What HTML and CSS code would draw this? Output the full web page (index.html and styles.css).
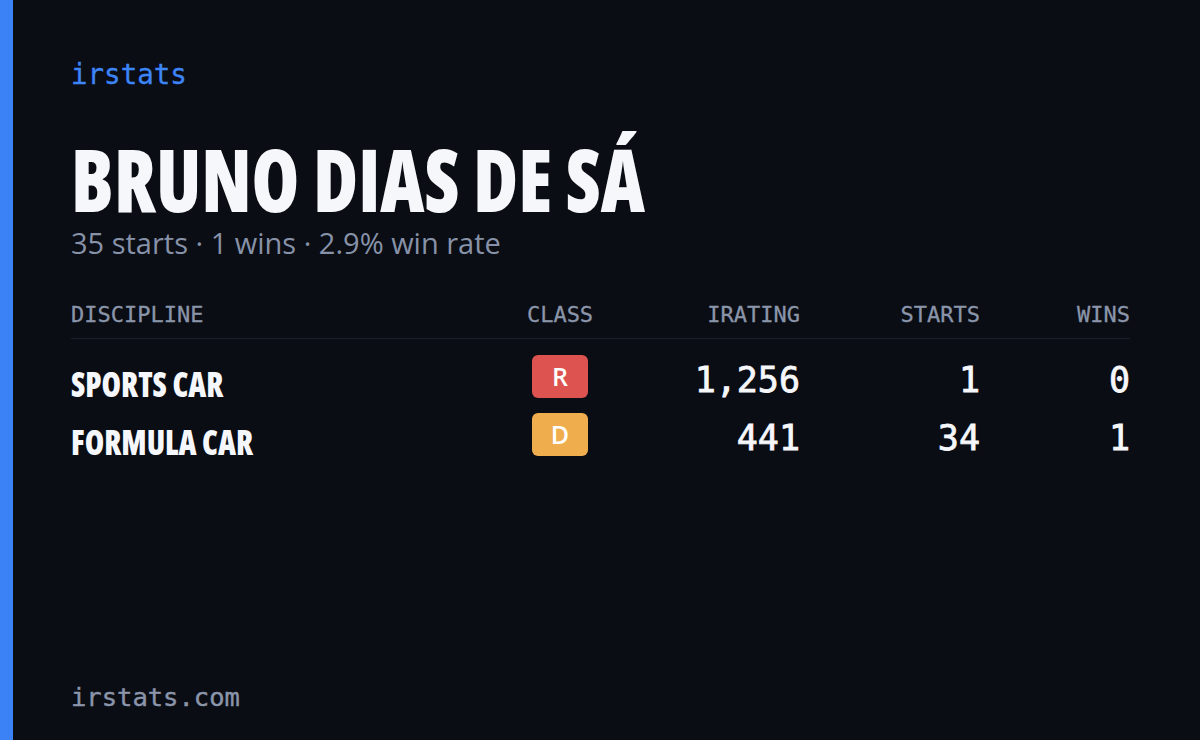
FILE: index.html
```html
<!DOCTYPE html>
<html>
<head>
<meta charset="utf-8">
<link rel="stylesheet" href="styles.css">
</head>
<body>
<div class="card">
  <div class="accent"></div>
  <main class="content">
    <div class="brand">irstats</div>
    <h1 class="name"><span class="cond">BRUNO DIAS DE SÁ</span></h1>
    <p class="summary">35 starts · 1 wins · 2.9% win rate</p>
    <div class="table">
      <div class="row head">
        <div class="c-disc">DISCIPLINE</div>
        <div class="c-class">CLASS</div>
        <div class="c-num">IRATING</div>
        <div class="c-num">STARTS</div>
        <div class="c-num">WINS</div>
      </div>
      <div class="row body">
        <div class="c-disc disc"><span class="cond cond-sm">SPORTS CAR</span></div>
        <div class="c-class"><span class="badge badge-r">R</span></div>
        <div class="c-num num">1,256</div>
        <div class="c-num num">1</div>
        <div class="c-num num">0</div>
      </div>
      <div class="row body">
        <div class="c-disc disc"><span class="cond cond-sm">FORMULA CAR</span></div>
        <div class="c-class"><span class="badge badge-d">D</span></div>
        <div class="c-num num">441</div>
        <div class="c-num num">34</div>
        <div class="c-num num">1</div>
      </div>
    </div>
    <div class="footer">irstats.com</div>
  </main>
</div>
</body>
</html>
```
FILE: styles.css
```css
html, body {
  margin: 0;
  padding: 0;
  background: #0a0d14;
}
.card {
  width: 1200px;
  height: 740px;
  display: flex;
  background: #0a0d14;
  color: #f5f7fb;
  overflow: hidden;
}
.accent {
  width: 13px;
  flex: none;
  background: #3b82f6;
}
.content {
  flex: 1;
  display: flex;
  flex-direction: column;
  padding: 58px 70px 28px 58px;
}
.brand {
  font-family: "DejaVu Sans Mono", monospace;
  font-size: 27.5px;
  line-height: 32px;
  color: #3d84f6;
  -webkit-text-stroke: 0.3px #3d84f6;
}
.cond {
  display: inline-block;
  transform: scaleX(0.895);
  transform-origin: left center;
  white-space: nowrap;
}
.cond-sm {
  transform: scaleX(0.872);
}
.name {
  margin: 44px 0 0;
  font-family: "Open Sans", sans-serif;
  font-stretch: 75%;
  font-weight: 800;
  font-size: 86px;
  line-height: 90px;
  color: #f5f7fb;
  white-space: nowrap;
}
.summary {
  margin: 1px 0 0;
  font-family: "Open Sans", sans-serif;
  font-weight: 500;
  font-size: 29px;
  line-height: 36px;
  color: #8792a8;
}
.table {
  margin-top: 41px;
  display: flex;
  flex-direction: column;
}
.row {
  display: grid;
  grid-template-columns: 456px 66px 207px 180px 150px;
}
.head {
  font-family: "DejaVu Sans Mono", monospace;
  font-size: 22px;
  line-height: 26px;
  color: #8a95aa;
  -webkit-text-stroke: 0.3px #8a95aa;
  padding-bottom: 10px;
  border-bottom: 1px solid #1b2029;
  margin-bottom: 16px;
}
.body {
  height: 58px;
  align-items: start;
}
.c-class {
  display: flex;
  justify-content: center;
}
.c-num {
  text-align: right;
}
.disc {
  font-family: "Open Sans", sans-serif;
  font-stretch: 75%;
  font-weight: 800;
  font-size: 36px;
  line-height: 58px;
  color: #f5f7fb;
}
.num {
  font-family: "DejaVu Sans Mono", monospace;
  font-size: 35px;
  line-height: 50px;
  color: #f5f7fb;
  -webkit-text-stroke: 0.8px #f5f7fb;
}
.badge {
  width: 56px;
  height: 43px;
  border-radius: 6px;
  display: flex;
  align-items: center;
  justify-content: center;
  font-family: "Open Sans", sans-serif;
  font-weight: 600;
  font-size: 25px;
  line-height: 1;
  color: #ffffff;
}
.badge-r { background: #dc5350; }
.badge-d { background: #f0ad4e; }
.footer {
  margin-top: auto;
  font-family: "DejaVu Sans Mono", monospace;
  font-size: 25.5px;
  line-height: 30px;
  color: #8a95aa;
  -webkit-text-stroke: 0.4px #8a95aa;
}
```
